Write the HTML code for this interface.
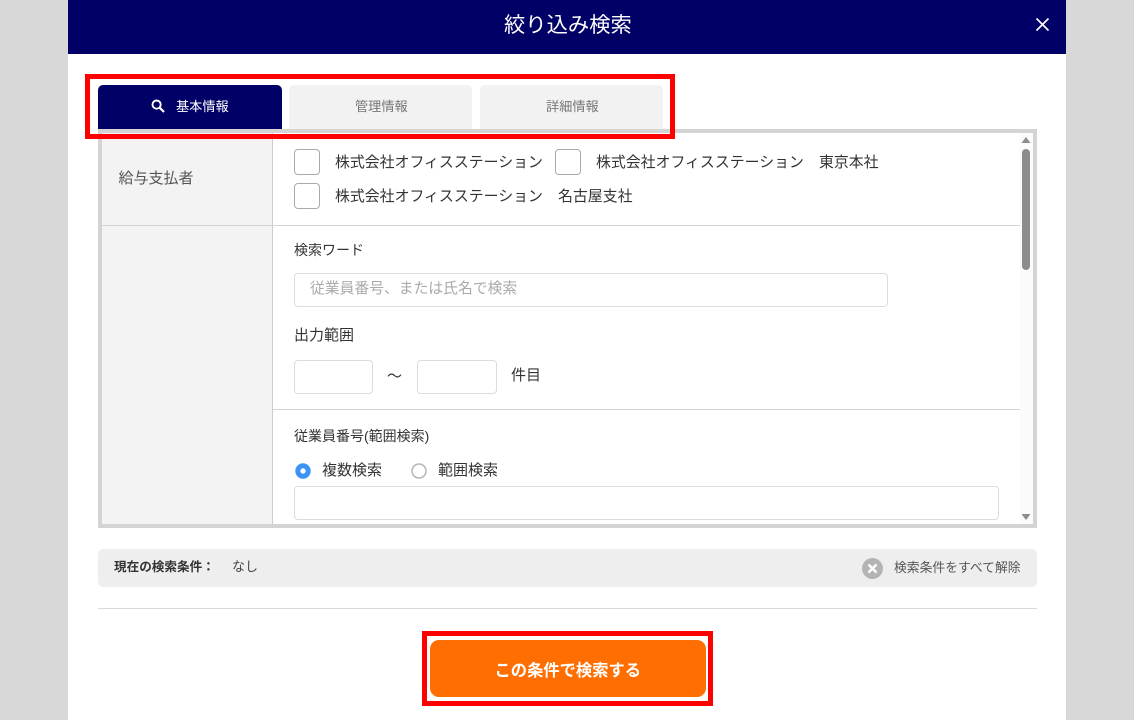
<!DOCTYPE html>
<html lang="ja"><head><meta charset="utf-8"><title>絞り込み検索</title>
<style>
html,body{margin:0;padding:0;width:1134px;height:720px;overflow:hidden;background:#d8d8d8}
body{position:relative;font-family:"Liberation Sans","Noto Sans CJK JP",sans-serif;color:#333}
div,svg{position:absolute;box-sizing:border-box}
#w{left:0;top:0;width:1134px;height:720px;filter:blur(.35px)}
.t{white-space:nowrap;line-height:20px;height:20px;margin-top:1px}
.f{background:#fff;border:1.5px solid #dcdcdc;border-radius:4px}
.c{width:26px;height:26px;border-color:#aaa}
.tab{top:85px;height:44px;border-radius:5px 5px 0 0;background:#f2f2f2}
.line{background:#d4d4d4;height:1px}
.red{border:5px solid #f00}
</style></head><body>
<div id="w">
<div style="left:68px;top:0;width:998px;height:720px;background:#fff"></div>
<div style="left:68px;top:0;width:998px;height:54px;background:#006"></div>
<div class="t" style="left:504px;top:14px;font-size:21.3px;color:#fff">絞り込み検索</div>
<svg style="left:1035px;top:17px" width="15" height="15" viewBox="0 0 15 15"><path d="M1.5 1.5L13.5 13.5M13.5 1.5L1.5 13.5" stroke="#fff" stroke-width="1.7" fill="none"/></svg>

<div class="tab" style="left:98px;width:184px;background:#006"></div>
<div class="tab" style="left:289px;width:183px"></div>
<div class="tab" style="left:480px;width:183px"></div>
<svg style="left:151px;top:99px" width="14" height="14" viewBox="0 0 14 14"><circle cx="5.6" cy="5.6" r="4.1" stroke="#fff" stroke-width="1.9" fill="none"/><path d="M8.6 8.6L13 13" stroke="#fff" stroke-width="2.2"/></svg>
<div class="t" style="left:176px;top:96px;font-size:13.2px;color:#fff">基本情報</div>
<div class="t" style="left:355px;top:96px;font-size:13.2px;color:#777">管理情報</div>
<div class="t" style="left:546px;top:96px;font-size:13.2px;color:#777">詳細情報</div>

<div style="left:98px;top:129px;width:939px;height:399px;background:#fff;border:4px solid #d4d4d4"></div>
<div style="left:102px;top:133px;width:171px;height:391px;background:#f3f3f3;border-right:1px solid #ccc"></div>
<div style="left:1020px;top:133px;width:13px;height:391px;background:#fbfbfb"></div>
<div style="left:1022px;top:149px;width:8px;height:121px;background:#8c8c8c;border-radius:4px"></div>
<svg style="left:1021px;top:137px" width="10" height="6"><path d="M5 0L9.5 6H.5Z" fill="#8c8c8c"/></svg>
<svg style="left:1021px;top:514px" width="10" height="6"><path d="M5 6L9.5 0H.5Z" fill="#8c8c8c"/></svg>

<div class="line" style="left:102px;top:225px;width:918px"></div>
<div class="line" style="left:273px;top:409px;width:747px"></div>

<div class="t" style="left:118.5px;top:168px;font-size:15px;color:#555">給与支払者</div>
<div class="f c" style="left:294px;top:149px"></div>
<div class="t" style="left:335px;top:151.5px;font-size:14.9px">株式会社オフィスステーション</div>
<div class="f c" style="left:555px;top:149px"></div>
<div class="t" style="left:596px;top:151.5px;font-size:14.9px">株式会社オフィスステーション</div>
<div class="t" style="left:819px;top:151.5px;font-size:14.9px">東京本社</div>
<div class="f c" style="left:294px;top:183px"></div>
<div class="t" style="left:335px;top:185.5px;font-size:14.9px">株式会社オフィスステーション</div>
<div class="t" style="left:558px;top:185.5px;font-size:14.9px">名古屋支社</div>

<div class="t" style="left:294px;top:239px;font-size:14px">検索ワード</div>
<div class="f" style="left:294px;top:272.5px;width:594px;height:34px"></div>
<div class="t" style="left:310px;top:278px;font-size:14.8px;color:#aaa">従業員番号、または氏名で検索</div>
<div class="t" style="left:294px;top:325px;font-size:15px">出力範囲</div>
<div class="f" style="left:294px;top:360px;width:79px;height:34px"></div>
<div class="t" style="left:387px;top:366px;font-size:15px">～</div>
<div class="f" style="left:417px;top:360px;width:80px;height:34px"></div>
<div class="t" style="left:511px;top:365px;font-size:15px">件目</div>

<div class="t" style="left:294px;top:424.5px;font-size:14px">従業員番号(範囲検索)</div>
<svg style="left:295px;top:463px" width="16" height="16"><circle cx="8" cy="8" r="5.2" fill="#fff" stroke="#3b94f5" stroke-width="5"/></svg>
<div class="t" style="left:322px;top:460px;font-size:15px">複数検索</div>
<svg style="left:411px;top:463px" width="16" height="16"><circle cx="8" cy="8" r="7" fill="#fff" stroke="#b5b5b5" stroke-width="1.5"/></svg>
<div class="t" style="left:438px;top:460px;font-size:15px">範囲検索</div>
<div class="f" style="left:294px;top:485.5px;width:705px;height:34px"></div>

<div style="left:98px;top:549px;width:939px;height:38px;background:#eee;border-radius:5px"></div>
<div class="t" style="left:114px;top:556px;font-size:12.6px;font-weight:bold">現在の検索条件：</div>
<div class="t" style="left:232px;top:556px;font-size:13px;color:#444">なし</div>
<svg style="left:862px;top:558px" width="21" height="21" viewBox="0 0 21 21"><circle cx="10.5" cy="10.5" r="10.5" fill="#b4b4b4"/><path d="M6.5 6.5L14.5 14.5M14.5 6.5L6.5 14.5" stroke="#fff" stroke-width="2.4"/></svg>
<div class="t" style="left:894px;top:557px;font-size:12.8px;color:#555">検索条件をすべて解除</div>
<div style="left:98px;top:608px;width:939px;height:1px;background:#d9d9d9"></div>

<div style="left:430px;top:640px;width:276px;height:57px;background:#ff6e00;border-radius:9px"></div>
<div class="t" style="left:494.5px;top:660px;font-size:16.3px;font-weight:bold;color:#fff">この条件で検索する</div>

<div class="red" style="left:85px;top:74px;width:590px;height:65px"></div>
<div class="red" style="left:422px;top:631px;width:291px;height:75px"></div>
</div>
</body></html>
